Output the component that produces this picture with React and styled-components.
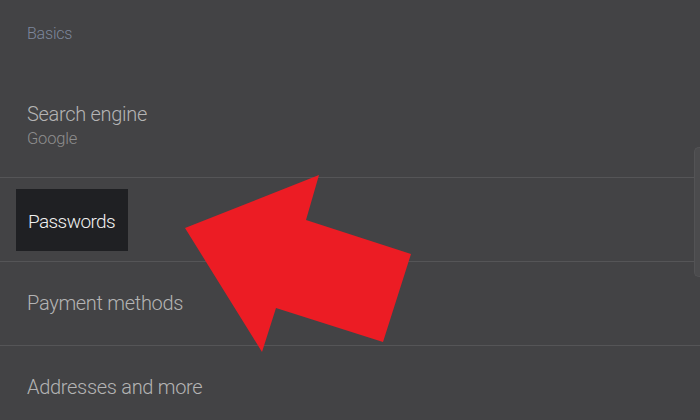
import React from "react";
import styled, { createGlobalStyle } from "styled-components";

const Global = createGlobalStyle`
  html, body { margin: 0; padding: 0; background: #434345; }
  body { font-family: Roboto, "Liberation Sans", sans-serif; }
`;

const Screen = styled.div`
  position: relative;
  width: 700px;
  height: 420px;
  overflow: hidden;
  background: #434345;
  display: flex;
  flex-direction: column;
`;

const SectionHeader = styled.div`
  box-sizing: border-box;
  height: 93px;
  padding: 24px 0 0 27px;
  font-size: 16px;
  line-height: 20px;
  font-weight: 300;
  letter-spacing: -0.2px;
  color: #7d879c;
  flex-shrink: 0;
`;

const Row = styled.div`
  box-sizing: border-box;
  height: 84px;
  flex-shrink: 0;
  display: flex;
  flex-direction: column;
  justify-content: center;
  align-items: flex-start;
  padding: 0 0 ${(p) => (p.$sub ? "18px" : "0")} 27px;
  border-top: ${(p) => (p.$first ? "none" : "1.5px solid #555557")};
`;

const Title = styled.div`
  font-size: 20px;
  line-height: 23px;
  font-weight: 300;
  letter-spacing: -0.3px;
  color: #b4b4b4;
`;

const Subtitle = styled.div`
  margin-top: 2px;
  font-size: 16.5px;
  line-height: 21px;
  font-weight: 300;
  letter-spacing: -0.2px;
  color: #8e8e8e;
`;

const Highlight = styled.div`
  box-sizing: border-box;
  height: 62px;
  margin-left: -11px;
  padding: 3px 13px 0 12px;
  display: flex;
  align-items: center;
  background: #1f2023;
  color: #f0f0f0;
  font-size: 19px;
  font-weight: 300;
  letter-spacing: -0.6px;
`;

const Scrollbar = styled.div`
  position: absolute;
  right: 0;
  top: 147px;
  width: 6px;
  height: 130px;
  box-sizing: border-box;
  border-radius: 5px 0 0 5px;
  background: #4b4b4d;
  border: 1px solid #535355;
  border-right: none;
`;

const ArrowLayer = styled.svg`
  position: absolute;
  left: 0;
  top: 0;
  pointer-events: none;
`;

export default function App() {
  return (
    <>
      <Global />
      <Screen>
        <SectionHeader>Basics</SectionHeader>
        <Row $first $sub>
          <Title>Search engine</Title>
          <Subtitle>Google</Subtitle>
        </Row>
        <Row>
          <Highlight>Passwords</Highlight>
        </Row>
        <Row>
          <Title>Payment methods</Title>
        </Row>
        <Row>
          <Title>Addresses and more</Title>
        </Row>
        <Scrollbar />
        <ArrowLayer width="700" height="420" viewBox="0 0 700 420">
          <polygon
            points="185,228 319,175 306,220 411,254 383,342 276,308 262,352"
            fill="#ec1c24"
          />
        </ArrowLayer>
      </Screen>
    </>
  );
}
